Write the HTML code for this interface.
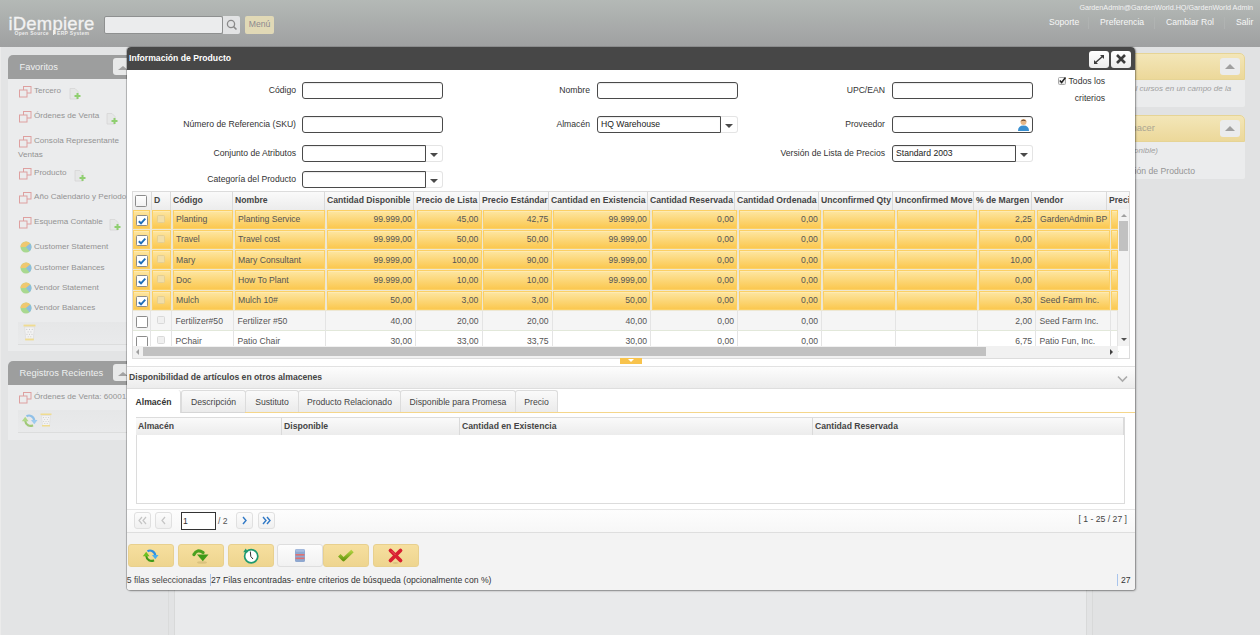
<!DOCTYPE html>
<html><head><meta charset="utf-8"><style>
*{box-sizing:border-box;margin:0;padding:0}
html,body{width:1260px;height:635px;overflow:hidden}
body{position:relative;background:#e3e4e5;font-family:"Liberation Sans",sans-serif;font-size:8.64px;color:#333}
.a{position:absolute}
.nw{white-space:nowrap}
#hdr{left:0;top:0;width:1260px;height:47px;background:linear-gradient(#b4b9b6,#9fa0a1)}
.pnl{background:#ebeced}
.ph{background:#9d9e9e;color:#eef0f0;font-size:9.36px}
.lnk{color:#939393;font-size:8.1px;white-space:nowrap}
#dlg{left:127px;top:47px;width:1008px;height:543px;background:#fff;border-radius:4px 4px 3px 3px;box-shadow:0 0 0 1px rgba(0,0,0,.10), 1px 1px 2px rgba(0,0,0,.35), -1px 0 1px rgba(0,0,0,.15)}
.lbl{font-size:8.64px;color:#333;text-align:right;white-space:nowrap}
.inp{height:17px;border:1px solid #4a4a4a;border-radius:3px;background:#fff;font-size:8.64px;color:#222;box-shadow:inset 0 1px 1px rgba(0,0,0,.08)}
.cbi{border-radius:3px 0 0 3px}
.cbb{width:17px;height:17px;border:1px solid #e4e4e4;border-left:none;background:#fff;border-radius:0 3px 3px 0}
.cbb:after{content:"";position:absolute;left:4px;top:7px;border-left:4px solid transparent;border-right:4px solid transparent;border-top:4px solid #4a4a4a}
.gh{top:0;height:18px;background:linear-gradient(#fafafa,#ececec);border-right:1px solid #dadada;font-weight:bold;color:#444;padding:3px 0 0 2px;white-space:nowrap;overflow:hidden}
.cell{white-space:nowrap;overflow:hidden;color:#555;padding:4.5px 3px 0 3.5px;line-height:10px}
.sel{background:linear-gradient(#fde6a2,#fbc850);border:1px solid #fcd064;box-shadow:inset 0 1px 0 rgba(255,240,200,.45);padding:3.5px 2.5px 0 2.5px}
.r{text-align:right}
.tab{top:0;height:22px;border:1px solid #dcdcdc;border-bottom:none;border-radius:3px 3px 0 0;background:linear-gradient(#fafafa,#ebebeb);color:#444;text-align:center;padding-top:5.5px;white-space:nowrap}
.pb{width:17px;height:17px;border:1px solid #e0e0e0;border-radius:3px;background:linear-gradient(#fcfcfc,#f0f0f0)}
.tbtn{top:497px;width:46px;height:23px;border-radius:3px;background:linear-gradient(#f6dd9a,#efd58e);border:1px solid #e9d08b}
</style></head><body>
<div id="hdr" class="a"></div>
<div class="a nw" style="left:8.5px;top:14.5px;color:#f2f2f2;font-size:18.5px;line-height:18.5px;letter-spacing:0.2px;-webkit-text-stroke:0.3px #f2f2f2">iDempiere</div>
<div class="a nw" style="left:14.5px;top:30.5px;color:#ececec;font-size:5px;line-height:5px;letter-spacing:0.3px;font-weight:bold">Open Source</div>
<div class="a" style="left:52.6px;top:30px;width:1.8px;height:5px;background:#ededed"></div>
<div class="a nw" style="left:57px;top:30.5px;color:#ececec;font-size:5px;line-height:5px;letter-spacing:0.3px;font-weight:bold">ERP System</div>
<div class="a" style="left:104px;top:16px;width:119px;height:18px;background:#ebeced;border:1px solid #8e9090;border-radius:2px"></div>
<div class="a" style="left:223px;top:16px;width:17px;height:18px;background:#e2e3e4;border-radius:0 2px 2px 0"></div>
<svg class="a" style="left:226px;top:19px" width="12" height="12" viewBox="0 0 12 12"><circle cx="5" cy="5" r="3.6" fill="none" stroke="#8a8a8a" stroke-width="1.3"/><line x1="7.6" y1="7.6" x2="10.5" y2="10.5" stroke="#8a8a8a" stroke-width="1.5"/></svg>
<div class="a nw" style="left:245px;top:16px;width:29px;height:18px;background:#e1d9b6;border-radius:2px;color:#8d8a90;font-size:8.64px;line-height:17px;text-align:center">Menú</div>
<div class="a nw" style="right:7px;top:3px;color:#f3f3f3;font-size:7.2px">GardenAdmin@GardenWorld.HQ/GardenWorld Admin</div>
<div class="a nw" style="left:1049px;top:17px;color:#f7f7f7;font-size:8.64px">Soporte</div>
<div class="a nw" style="left:1100px;top:17px;color:#f7f7f7;font-size:8.64px">Preferencia</div>
<div class="a nw" style="left:1166px;top:17px;color:#f7f7f7;font-size:8.64px">Cambiar Rol</div>
<div class="a nw" style="left:1236px;top:17px;color:#f7f7f7;font-size:8.64px">Salir</div>
<div class="a" style="left:1088px;top:17px;width:1px;height:12px;background:#b0b3b2"></div>
<div class="a" style="left:1154px;top:17px;width:1px;height:12px;background:#b0b3b2"></div>
<div class="a" style="left:1224px;top:17px;width:1px;height:12px;background:#b0b3b2"></div>
<div class="a" style="left:0;top:47px;width:168px;height:588px;background:#e3e4e5;border-left:1px solid #ebebeb"></div>
<div class="a" style="left:168px;top:47px;width:7px;height:588px;background:#e2e3e4;border-left:1px solid #dadbdb;border-right:1px solid #d8d9d9"></div>
<div class="a" style="left:175px;top:47px;width:911px;height:588px;background:#e9eaeb"></div>
<div class="a" style="left:1086px;top:47px;width:7px;height:588px;background:#e2e3e4;border-left:1px solid #d8d9d9;border-right:1px solid #d8d9d9"></div>
<div class="a" style="left:1093px;top:47px;width:167px;height:588px;background:#e1e2e3"></div>
<div class="a pnl" style="left:8px;top:55px;width:161px;height:296px;border-radius:5px 5px 0 0"></div>
<div class="a ph nw" style="left:8px;top:55px;width:161px;height:24px;border-radius:5px 5px 0 0;padding:7px 0 0 11.5px">Favoritos</div>
<div class="a" style="left:113px;top:58px;width:20px;height:17px;background:#e8e9e9;border-radius:3px"></div>
<div class="a" style="left:118px;top:65.5px;border-left:5px solid transparent;border-right:5px solid transparent;border-bottom:4px solid #a2a2a2"></div>
<svg class="a" style="left:19px;top:86px" width="13" height="12" viewBox="0 0 13 12"><rect x="4.5" y="0.5" width="7.5" height="6.5" fill="none" stroke="#dea0a0" stroke-width="1"/><rect x="0.5" y="4" width="7.5" height="7" fill="#ebeced" stroke="#dea0a0" stroke-width="1"/></svg>
<div class="a lnk" style="left:34px;top:86px">Tercero</div>
<svg class="a" style="left:69px;top:88px" width="12" height="12" viewBox="0 0 12 12"><path d="M1 0.5h5l3 3v7.5h-8z" fill="#e6e7e7" stroke="#d5d6d6" stroke-width="0.8"/><path d="M5.5 8h6M8.5 5v6" stroke="#8fcf70" stroke-width="2"/></svg>
<svg class="a" style="left:19px;top:111px" width="13" height="12" viewBox="0 0 13 12"><rect x="4.5" y="0.5" width="7.5" height="6.5" fill="none" stroke="#dea0a0" stroke-width="1"/><rect x="0.5" y="4" width="7.5" height="7" fill="#ebeced" stroke="#dea0a0" stroke-width="1"/></svg>
<div class="a lnk" style="left:34px;top:111px">Órdenes de Venta</div>
<svg class="a" style="left:106px;top:113px" width="12" height="12" viewBox="0 0 12 12"><path d="M1 0.5h5l3 3v7.5h-8z" fill="#e6e7e7" stroke="#d5d6d6" stroke-width="0.8"/><path d="M5.5 8h6M8.5 5v6" stroke="#8fcf70" stroke-width="2"/></svg>
<svg class="a" style="left:19px;top:136px" width="13" height="12" viewBox="0 0 13 12"><rect x="4.5" y="0.5" width="7.5" height="6.5" fill="none" stroke="#dea0a0" stroke-width="1"/><rect x="0.5" y="4" width="7.5" height="7" fill="#ebeced" stroke="#dea0a0" stroke-width="1"/></svg>
<div class="a lnk" style="left:34px;top:136px">Consola Representante</div>
<svg class="a" style="left:19px;top:168px" width="13" height="12" viewBox="0 0 13 12"><rect x="4.5" y="0.5" width="7.5" height="6.5" fill="none" stroke="#dea0a0" stroke-width="1"/><rect x="0.5" y="4" width="7.5" height="7" fill="#ebeced" stroke="#dea0a0" stroke-width="1"/></svg>
<div class="a lnk" style="left:34px;top:168px">Producto</div>
<svg class="a" style="left:74px;top:170px" width="12" height="12" viewBox="0 0 12 12"><path d="M1 0.5h5l3 3v7.5h-8z" fill="#e6e7e7" stroke="#d5d6d6" stroke-width="0.8"/><path d="M5.5 8h6M8.5 5v6" stroke="#8fcf70" stroke-width="2"/></svg>
<svg class="a" style="left:19px;top:192px" width="13" height="12" viewBox="0 0 13 12"><rect x="4.5" y="0.5" width="7.5" height="6.5" fill="none" stroke="#dea0a0" stroke-width="1"/><rect x="0.5" y="4" width="7.5" height="7" fill="#ebeced" stroke="#dea0a0" stroke-width="1"/></svg>
<div class="a lnk" style="left:34px;top:192px">Año Calendario y Periodo</div>
<svg class="a" style="left:19px;top:217px" width="13" height="12" viewBox="0 0 13 12"><rect x="4.5" y="0.5" width="7.5" height="6.5" fill="none" stroke="#dea0a0" stroke-width="1"/><rect x="0.5" y="4" width="7.5" height="7" fill="#ebeced" stroke="#dea0a0" stroke-width="1"/></svg>
<div class="a lnk" style="left:34px;top:217px">Esquema Contable</div>
<svg class="a" style="left:109px;top:219px" width="12" height="12" viewBox="0 0 12 12"><path d="M1 0.5h5l3 3v7.5h-8z" fill="#e6e7e7" stroke="#d5d6d6" stroke-width="0.8"/><path d="M5.5 8h6M8.5 5v6" stroke="#8fcf70" stroke-width="2"/></svg>
<div class="a lnk" style="left:18px;top:150px">Ventas</div>
<svg class="a" style="left:20px;top:241px" width="12" height="12" viewBox="0 0 12 12"><circle cx="6" cy="6" r="5.5" fill="#a8d890"/><path d="M6 6L0.5 6A5.5 5.5 0 0 1 10.2 2.5z" fill="#f0c870"/><path d="M6 6L10.2 2.5A5.5 5.5 0 0 1 9.5 10.2z" fill="#8cbde0"/></svg>
<div class="a lnk" style="left:34px;top:242px">Customer Statement</div>
<svg class="a" style="left:20px;top:262px" width="12" height="12" viewBox="0 0 12 12"><circle cx="6" cy="6" r="5.5" fill="#a8d890"/><path d="M6 6L0.5 6A5.5 5.5 0 0 1 10.2 2.5z" fill="#f0c870"/><path d="M6 6L10.2 2.5A5.5 5.5 0 0 1 9.5 10.2z" fill="#8cbde0"/></svg>
<div class="a lnk" style="left:34px;top:263px">Customer Balances</div>
<svg class="a" style="left:20px;top:282px" width="12" height="12" viewBox="0 0 12 12"><circle cx="6" cy="6" r="5.5" fill="#a8d890"/><path d="M6 6L0.5 6A5.5 5.5 0 0 1 10.2 2.5z" fill="#f0c870"/><path d="M6 6L10.2 2.5A5.5 5.5 0 0 1 9.5 10.2z" fill="#8cbde0"/></svg>
<div class="a lnk" style="left:34px;top:283px">Vendor Statement</div>
<svg class="a" style="left:20px;top:302px" width="12" height="12" viewBox="0 0 12 12"><circle cx="6" cy="6" r="5.5" fill="#a8d890"/><path d="M6 6L0.5 6A5.5 5.5 0 0 1 10.2 2.5z" fill="#f0c870"/><path d="M6 6L10.2 2.5A5.5 5.5 0 0 1 9.5 10.2z" fill="#8cbde0"/></svg>
<div class="a lnk" style="left:34px;top:303px">Vendor Balances</div>
<div class="a" style="left:18px;top:322px;width:151px;height:23px;background:linear-gradient(#e6e7e8,#e9eaeb);border-bottom:1px solid #dcdddd"></div>
<svg class="a" style="left:22.5px;top:324px" width="13" height="17" viewBox="0 0 12 14" preserveAspectRatio="none"><rect x="0.5" y="0.5" width="11" height="1.6" fill="#f0dc90"/><path d="M1.5 2.5h9l-1 10h-7z" fill="#f2f2f2" stroke="#dcdcdc" stroke-width="0.6"/><g fill="#c8c8c8"><circle cx="3.5" cy="4.5" r=".5"/><circle cx="6" cy="4.5" r=".5"/><circle cx="8.5" cy="4.5" r=".5"/><circle cx="4.7" cy="6.5" r=".5"/><circle cx="7.3" cy="6.5" r=".5"/><circle cx="3.7" cy="8.5" r=".5"/><circle cx="6" cy="8.5" r=".5"/><circle cx="8.3" cy="8.5" r=".5"/><circle cx="4.8" cy="10.5" r=".5"/><circle cx="7.2" cy="10.5" r=".5"/></g><rect x="2" y="12" width="8" height="1.5" fill="#f0dc90"/></svg>
<div class="a pnl" style="left:8px;top:361px;width:161px;height:79px;border-radius:5px 5px 0 0"></div>
<div class="a ph nw" style="left:8px;top:361px;width:161px;height:24px;border-radius:5px 5px 0 0;padding:7px 0 0 11.5px">Registros Recientes</div>
<div class="a" style="left:113px;top:364px;width:20px;height:17px;background:#e8e9e9;border-radius:3px"></div>
<div class="a" style="left:118px;top:371.5px;border-left:5px solid transparent;border-right:5px solid transparent;border-bottom:4px solid #a2a2a2"></div>
<svg class="a" style="left:19px;top:392px" width="13" height="12" viewBox="0 0 13 12"><rect x="4.5" y="0.5" width="7.5" height="6.5" fill="none" stroke="#dea0a0" stroke-width="1"/><rect x="0.5" y="4" width="7.5" height="7" fill="#ebeced" stroke="#dea0a0" stroke-width="1"/></svg>
<div class="a lnk" style="left:34px;top:392px">Órdenes de Venta: 60001</div>
<div class="a" style="left:18px;top:410px;width:151px;height:23px;background:linear-gradient(#e6e7e8,#e9eaeb);border-bottom:1px solid #dcdddd"></div>
<svg class="a" style="left:21px;top:412px" width="18" height="17" viewBox="0 0 18 17"><path d="M5.5 4.2A5.2 5.2 0 0 1 13.2 8.5" fill="none" stroke="#90c0e8" stroke-width="2.2"/><path d="M10 8h6.5l-3.2 4.2z" fill="#9ccbef"/><path d="M12 13.2A5.2 5.2 0 0 1 4.3 9" fill="none" stroke="#a0c878" stroke-width="2.2"/><path d="M0.8 9.2h6.8l-3.4-4.4z" fill="#b0d888"/></svg>
<svg class="a" style="left:40px;top:413px" width="12" height="14" viewBox="0 0 12 14"><rect x="0.5" y="0.5" width="11" height="1.6" fill="#f0dc90"/><path d="M1.5 2.5h9l-1 10h-7z" fill="#f2f2f2" stroke="#dcdcdc" stroke-width="0.6"/><g fill="#c8c8c8"><circle cx="3.5" cy="4.5" r=".5"/><circle cx="6" cy="4.5" r=".5"/><circle cx="8.5" cy="4.5" r=".5"/><circle cx="4.7" cy="6.5" r=".5"/><circle cx="7.3" cy="6.5" r=".5"/><circle cx="3.7" cy="8.5" r=".5"/><circle cx="6" cy="8.5" r=".5"/><circle cx="8.3" cy="8.5" r=".5"/><circle cx="4.8" cy="10.5" r=".5"/><circle cx="7.2" cy="10.5" r=".5"/></g><rect x="2" y="12" width="8" height="1.5" fill="#f0dc90"/></svg>
<div class="a pnl" style="left:1130px;top:53px;width:115px;height:54px;border-radius:5px 5px 2px 2px"></div>
<div class="a" style="left:1130px;top:53px;width:115px;height:27px;border-radius:5px 5px 0 0;background:linear-gradient(#f3e6b8,#ecd89a);border:1px solid #e6d495"></div>
<div class="a" style="left:1220px;top:58px;width:20px;height:17px;background:#ebeced;border-radius:3px"></div>
<div class="a" style="left:1225px;top:64px;border-left:5px solid transparent;border-right:5px solid transparent;border-bottom:5px solid #a0a0a0"></div>
<div class="a pnl" style="left:1130px;top:115px;width:115px;height:64px;border-radius:5px 5px 2px 2px"></div>
<div class="a" style="left:1130px;top:115px;width:115px;height:27px;border-radius:5px 5px 0 0;background:linear-gradient(#f3e6b8,#ecd89a);border:1px solid #e6d495"></div>
<div class="a" style="left:1220px;top:120px;width:20px;height:17px;background:#ebeced;border-radius:3px"></div>
<div class="a" style="left:1225px;top:126px;border-left:5px solid transparent;border-right:5px solid transparent;border-bottom:5px solid #a0a0a0"></div>
<div class="a nw" style="left:1135.5px;top:84px;color:#a0a0a0;font-size:8px;font-style:italic">l cursos en un campo de la</div>
<div class="a nw" style="left:1131.5px;top:122.5px;color:#aaa593;font-size:9.36px">hacer</div>
<div class="a nw" style="left:1134px;top:145.5px;color:#a0a0a0;font-size:8px;font-style:italic">onible)</div>
<div class="a nw" style="left:1130.3px;top:166px;color:#959595;font-size:8.64px">ción de Producto</div>
<div id="dlg" class="a">
<div class="a nw" style="left:0;top:0;width:1008px;height:23px;background:#474747;border-radius:4px 4px 0 0;color:#fff;font-weight:bold;padding:5.5px 0 0 2px">Información de Producto</div>
<div class="a" style="left:962px;top:4px;width:20px;height:17px;background:linear-gradient(#fff,#ececec);border-radius:3px"></div>
<svg class="a" style="left:964px;top:5px" width="16" height="15" viewBox="0 0 16 15"><path d="M4 11L12 4" stroke="#3c3c3c" stroke-width="1.4"/><path d="M9 3h4v4z" fill="#3c3c3c"/><path d="M3 8v4h4z" fill="#3c3c3c"/></svg>
<div class="a" style="left:984px;top:4px;width:20px;height:17px;background:linear-gradient(#fff,#ececec);border-radius:3px"></div>
<svg class="a" style="left:988px;top:6px" width="12" height="12" viewBox="0 0 12 12"><path d="M2 2L10 10M10 2L2 10" stroke="#3c3c3c" stroke-width="2.6"/></svg>
<div class="a lbl" style="right:839px;top:38px">Código</div>
<div class="a lbl" style="right:839px;top:72px">Número de Referencia (SKU)</div>
<div class="a lbl" style="right:839px;top:101px">Conjunto de Atributos</div>
<div class="a lbl" style="right:839px;top:127px">Categoría del Producto</div>
<div class="a lbl" style="right:545px;top:38px">Nombre</div>
<div class="a lbl" style="right:545px;top:72px">Almacén</div>
<div class="a lbl" style="right:250px;top:38px">UPC/EAN</div>
<div class="a lbl" style="right:250px;top:72px">Proveedor</div>
<div class="a lbl" style="right:250px;top:101px">Versión de Lista de Precios</div>
<div class="a inp nw" style="left:175px;top:35px;width:141px;padding:2px 3px"></div>
<div class="a inp nw" style="left:175px;top:69px;width:141px;padding:2px 3px"></div>
<div class="a inp cbi nw" style="left:175px;top:98px;width:124px;padding:2px 3px"></div>
<div class="a cbb" style="left:299px;top:98px"></div>
<div class="a inp cbi nw" style="left:175px;top:124px;width:124px;padding:2px 3px"></div>
<div class="a cbb" style="left:299px;top:124px"></div>
<div class="a inp nw" style="left:470px;top:35px;width:141px;padding:2px 3px"></div>
<div class="a inp cbi nw" style="left:470px;top:69px;width:124px;padding:2px 3px">HQ Warehouse</div>
<div class="a cbb" style="left:594px;top:69px"></div>
<div class="a inp nw" style="left:765px;top:35px;width:141px;padding:2px 3px"></div>
<div class="a inp nw" style="left:765px;top:69px;width:141px;padding:2px 3px"></div>
<div class="a inp cbi nw" style="left:765px;top:98px;width:124px;padding:2px 3px">Standard 2003</div>
<div class="a cbb" style="left:889px;top:98px"></div>
<svg class="a" style="left:890px;top:71px" width="13" height="13" viewBox="0 0 13 13"><circle cx="6.5" cy="4" r="3" fill="#e8b888"/><path d="M3.5 3.5Q6.5 -0.5 9.5 3.5Q6.5 2 3.5 3.5z" fill="#6a4a30"/><path d="M1 13Q1 7.5 6.5 7.5Q12 7.5 12 13z" fill="#3a8fd0"/></svg>
<div class="a" style="left:931px;top:30px;width:8px;height:8px;border:1px solid #a8a8a8;background:linear-gradient(#fff,#e6e6e6);border-radius:1.5px"></div>
<svg class="a" style="left:931px;top:29px" width="9" height="9" viewBox="0 0 9 9"><path d="M1.8 4.5L3.6 6.5L7.5 1.5" fill="none" stroke="#222" stroke-width="1.5"/></svg>
<div class="a lbl" style="right:30px;top:29px">Todos los</div>
<div class="a lbl" style="right:30px;top:46px">criterios</div>
<div class="a" style="left:5px;top:144px;width:998px;height:168px;border:1px solid #dcdcdc;background:#fff;overflow:hidden">
<div class="a gh" style="left:-1px;width:20px"></div>
<div class="a gh" style="left:19px;width:19px">D</div>
<div class="a gh" style="left:38px;width:62px">Código</div>
<div class="a gh" style="left:100px;width:92px">Nombre</div>
<div class="a gh" style="left:192px;width:89px">Cantidad Disponible</div>
<div class="a gh" style="left:281px;width:66px">Precio de Lista</div>
<div class="a gh" style="left:347px;width:69px">Precio Estándar</div>
<div class="a gh" style="left:416px;width:99px">Cantidad en Existencia</div>
<div class="a gh" style="left:515px;width:87px">Cantidad Reservada</div>
<div class="a gh" style="left:602px;width:84px">Cantidad Ordenada</div>
<div class="a gh" style="left:686px;width:74px">Unconfirmed Qty</div>
<div class="a gh" style="left:760px;width:81px">Unconfirmed Move</div>
<div class="a gh" style="left:841px;width:58px">% de Margen</div>
<div class="a gh" style="left:899px;width:75px">Vendor</div>
<div class="a gh" style="left:974px;width:53px">Precio</div>
<div class="a" style="left:2px;top:3px;width:12px;height:12px;border:1px solid #8c8c8c;border-radius:1.5px;background:linear-gradient(#fff,#f2f2f2)"></div>
<div class="a" style="left:0;top:17.5px;width:986px;height:20.3px;background:#ede7d3"></div>
<div class="a cell sel" style="left:-0.4px;top:17.5px;width:17.8px;height:19.3px;text-align:left"></div>
<div class="a cell sel" style="left:18.6px;top:17.5px;width:19.8px;height:19.3px;text-align:left"></div>
<div class="a cell sel" style="left:39.6px;top:17.5px;width:60.8px;height:19.3px;text-align:left">Planting</div>
<div class="a cell sel" style="left:101.6px;top:17.5px;width:90.8px;height:19.3px;text-align:left">Planting Service</div>
<div class="a cell sel" style="left:193.6px;top:17.5px;width:88.8px;height:19.3px;text-align:right">99.999,00</div>
<div class="a cell sel" style="left:283.6px;top:17.5px;width:65.3px;height:19.3px;text-align:right">45,00</div>
<div class="a cell sel" style="left:350.1px;top:17.5px;width:68.8px;height:19.3px;text-align:right">42,75</div>
<div class="a cell sel" style="left:420.1px;top:17.5px;width:97.3px;height:19.3px;text-align:right">99.999,00</div>
<div class="a cell sel" style="left:518.6px;top:17.5px;width:85.8px;height:19.3px;text-align:right">0,00</div>
<div class="a cell sel" style="left:605.6px;top:17.5px;width:82.8px;height:19.3px;text-align:right">0,00</div>
<div class="a cell sel" style="left:689.6px;top:17.5px;width:72.8px;height:19.3px;text-align:right"></div>
<div class="a cell sel" style="left:763.6px;top:17.5px;width:80.8px;height:19.3px;text-align:right"></div>
<div class="a cell sel" style="left:845.6px;top:17.5px;width:56.8px;height:19.3px;text-align:right">2,25</div>
<div class="a cell sel" style="left:903.6px;top:17.5px;width:73.3px;height:19.3px;text-align:left">GardenAdmin BP</div>
<div class="a cell sel" style="left:978.1px;top:17.5px;width:6.3px;height:19.3px;text-align:left"></div>
<div class="a" style="left:3.3px;top:22.5px;width:11.5px;height:11.5px;border:1px solid #8c8c8c;border-radius:1.5px;background:#fff"></div>
<svg class="a" style="left:4px;top:23.5px" width="10" height="10" viewBox="0 0 10 10"><path d="M1.8 5.3L4 7.3L8.3 2.6" fill="none" stroke="#1f6fb8" stroke-width="1.9"/></svg>
<div class="a" style="left:24px;top:22.5px;width:8px;height:8px;border:1px solid #e3cf95;border-radius:1.5px;background:#f1dea8"></div>
<div class="a" style="left:0;top:37.8px;width:986px;height:20.3px;background:#ede7d3"></div>
<div class="a cell sel" style="left:-0.4px;top:37.8px;width:17.8px;height:19.3px;text-align:left"></div>
<div class="a cell sel" style="left:18.6px;top:37.8px;width:19.8px;height:19.3px;text-align:left"></div>
<div class="a cell sel" style="left:39.6px;top:37.8px;width:60.8px;height:19.3px;text-align:left">Travel</div>
<div class="a cell sel" style="left:101.6px;top:37.8px;width:90.8px;height:19.3px;text-align:left">Travel cost</div>
<div class="a cell sel" style="left:193.6px;top:37.8px;width:88.8px;height:19.3px;text-align:right">99.999,00</div>
<div class="a cell sel" style="left:283.6px;top:37.8px;width:65.3px;height:19.3px;text-align:right">50,00</div>
<div class="a cell sel" style="left:350.1px;top:37.8px;width:68.8px;height:19.3px;text-align:right">50,00</div>
<div class="a cell sel" style="left:420.1px;top:37.8px;width:97.3px;height:19.3px;text-align:right">99.999,00</div>
<div class="a cell sel" style="left:518.6px;top:37.8px;width:85.8px;height:19.3px;text-align:right">0,00</div>
<div class="a cell sel" style="left:605.6px;top:37.8px;width:82.8px;height:19.3px;text-align:right">0,00</div>
<div class="a cell sel" style="left:689.6px;top:37.8px;width:72.8px;height:19.3px;text-align:right"></div>
<div class="a cell sel" style="left:763.6px;top:37.8px;width:80.8px;height:19.3px;text-align:right"></div>
<div class="a cell sel" style="left:845.6px;top:37.8px;width:56.8px;height:19.3px;text-align:right">0,00</div>
<div class="a cell sel" style="left:903.6px;top:37.8px;width:73.3px;height:19.3px;text-align:left"></div>
<div class="a cell sel" style="left:978.1px;top:37.8px;width:6.3px;height:19.3px;text-align:left"></div>
<div class="a" style="left:3.3px;top:42.8px;width:11.5px;height:11.5px;border:1px solid #8c8c8c;border-radius:1.5px;background:#fff"></div>
<svg class="a" style="left:4px;top:43.8px" width="10" height="10" viewBox="0 0 10 10"><path d="M1.8 5.3L4 7.3L8.3 2.6" fill="none" stroke="#1f6fb8" stroke-width="1.9"/></svg>
<div class="a" style="left:24px;top:42.8px;width:8px;height:8px;border:1px solid #e3cf95;border-radius:1.5px;background:#f1dea8"></div>
<div class="a" style="left:0;top:58.1px;width:986px;height:20.3px;background:#ede7d3"></div>
<div class="a cell sel" style="left:-0.4px;top:58.1px;width:17.8px;height:19.3px;text-align:left"></div>
<div class="a cell sel" style="left:18.6px;top:58.1px;width:19.8px;height:19.3px;text-align:left"></div>
<div class="a cell sel" style="left:39.6px;top:58.1px;width:60.8px;height:19.3px;text-align:left">Mary</div>
<div class="a cell sel" style="left:101.6px;top:58.1px;width:90.8px;height:19.3px;text-align:left">Mary Consultant</div>
<div class="a cell sel" style="left:193.6px;top:58.1px;width:88.8px;height:19.3px;text-align:right">99.999,00</div>
<div class="a cell sel" style="left:283.6px;top:58.1px;width:65.3px;height:19.3px;text-align:right">100,00</div>
<div class="a cell sel" style="left:350.1px;top:58.1px;width:68.8px;height:19.3px;text-align:right">90,00</div>
<div class="a cell sel" style="left:420.1px;top:58.1px;width:97.3px;height:19.3px;text-align:right">99.999,00</div>
<div class="a cell sel" style="left:518.6px;top:58.1px;width:85.8px;height:19.3px;text-align:right">0,00</div>
<div class="a cell sel" style="left:605.6px;top:58.1px;width:82.8px;height:19.3px;text-align:right">0,00</div>
<div class="a cell sel" style="left:689.6px;top:58.1px;width:72.8px;height:19.3px;text-align:right"></div>
<div class="a cell sel" style="left:763.6px;top:58.1px;width:80.8px;height:19.3px;text-align:right"></div>
<div class="a cell sel" style="left:845.6px;top:58.1px;width:56.8px;height:19.3px;text-align:right">10,00</div>
<div class="a cell sel" style="left:903.6px;top:58.1px;width:73.3px;height:19.3px;text-align:left"></div>
<div class="a cell sel" style="left:978.1px;top:58.1px;width:6.3px;height:19.3px;text-align:left"></div>
<div class="a" style="left:3.3px;top:63.1px;width:11.5px;height:11.5px;border:1px solid #8c8c8c;border-radius:1.5px;background:#fff"></div>
<svg class="a" style="left:4px;top:64.1px" width="10" height="10" viewBox="0 0 10 10"><path d="M1.8 5.3L4 7.3L8.3 2.6" fill="none" stroke="#1f6fb8" stroke-width="1.9"/></svg>
<div class="a" style="left:24px;top:63.1px;width:8px;height:8px;border:1px solid #e3cf95;border-radius:1.5px;background:#f1dea8"></div>
<div class="a" style="left:0;top:78.4px;width:986px;height:20.3px;background:#ede7d3"></div>
<div class="a cell sel" style="left:-0.4px;top:78.4px;width:17.8px;height:19.3px;text-align:left"></div>
<div class="a cell sel" style="left:18.6px;top:78.4px;width:19.8px;height:19.3px;text-align:left"></div>
<div class="a cell sel" style="left:39.6px;top:78.4px;width:60.8px;height:19.3px;text-align:left">Doc</div>
<div class="a cell sel" style="left:101.6px;top:78.4px;width:90.8px;height:19.3px;text-align:left">How To Plant</div>
<div class="a cell sel" style="left:193.6px;top:78.4px;width:88.8px;height:19.3px;text-align:right">99.999,00</div>
<div class="a cell sel" style="left:283.6px;top:78.4px;width:65.3px;height:19.3px;text-align:right">10,00</div>
<div class="a cell sel" style="left:350.1px;top:78.4px;width:68.8px;height:19.3px;text-align:right">10,00</div>
<div class="a cell sel" style="left:420.1px;top:78.4px;width:97.3px;height:19.3px;text-align:right">99.999,00</div>
<div class="a cell sel" style="left:518.6px;top:78.4px;width:85.8px;height:19.3px;text-align:right">0,00</div>
<div class="a cell sel" style="left:605.6px;top:78.4px;width:82.8px;height:19.3px;text-align:right">0,00</div>
<div class="a cell sel" style="left:689.6px;top:78.4px;width:72.8px;height:19.3px;text-align:right"></div>
<div class="a cell sel" style="left:763.6px;top:78.4px;width:80.8px;height:19.3px;text-align:right"></div>
<div class="a cell sel" style="left:845.6px;top:78.4px;width:56.8px;height:19.3px;text-align:right">0,00</div>
<div class="a cell sel" style="left:903.6px;top:78.4px;width:73.3px;height:19.3px;text-align:left"></div>
<div class="a cell sel" style="left:978.1px;top:78.4px;width:6.3px;height:19.3px;text-align:left"></div>
<div class="a" style="left:3.3px;top:83.4px;width:11.5px;height:11.5px;border:1px solid #8c8c8c;border-radius:1.5px;background:#fff"></div>
<svg class="a" style="left:4px;top:84.4px" width="10" height="10" viewBox="0 0 10 10"><path d="M1.8 5.3L4 7.3L8.3 2.6" fill="none" stroke="#1f6fb8" stroke-width="1.9"/></svg>
<div class="a" style="left:24px;top:83.4px;width:8px;height:8px;border:1px solid #e3cf95;border-radius:1.5px;background:#f1dea8"></div>
<div class="a" style="left:0;top:98.7px;width:986px;height:20.3px;background:#ede7d3"></div>
<div class="a cell sel" style="left:-0.4px;top:98.7px;width:17.8px;height:19.3px;text-align:left"></div>
<div class="a cell sel" style="left:18.6px;top:98.7px;width:19.8px;height:19.3px;text-align:left"></div>
<div class="a cell sel" style="left:39.6px;top:98.7px;width:60.8px;height:19.3px;text-align:left">Mulch</div>
<div class="a cell sel" style="left:101.6px;top:98.7px;width:90.8px;height:19.3px;text-align:left">Mulch 10#</div>
<div class="a cell sel" style="left:193.6px;top:98.7px;width:88.8px;height:19.3px;text-align:right">50,00</div>
<div class="a cell sel" style="left:283.6px;top:98.7px;width:65.3px;height:19.3px;text-align:right">3,00</div>
<div class="a cell sel" style="left:350.1px;top:98.7px;width:68.8px;height:19.3px;text-align:right">3,00</div>
<div class="a cell sel" style="left:420.1px;top:98.7px;width:97.3px;height:19.3px;text-align:right">50,00</div>
<div class="a cell sel" style="left:518.6px;top:98.7px;width:85.8px;height:19.3px;text-align:right">0,00</div>
<div class="a cell sel" style="left:605.6px;top:98.7px;width:82.8px;height:19.3px;text-align:right">0,00</div>
<div class="a cell sel" style="left:689.6px;top:98.7px;width:72.8px;height:19.3px;text-align:right"></div>
<div class="a cell sel" style="left:763.6px;top:98.7px;width:80.8px;height:19.3px;text-align:right"></div>
<div class="a cell sel" style="left:845.6px;top:98.7px;width:56.8px;height:19.3px;text-align:right">0,30</div>
<div class="a cell sel" style="left:903.6px;top:98.7px;width:73.3px;height:19.3px;text-align:left">Seed Farm Inc.</div>
<div class="a cell sel" style="left:978.1px;top:98.7px;width:6.3px;height:19.3px;text-align:left"></div>
<div class="a" style="left:3.3px;top:103.7px;width:11.5px;height:11.5px;border:1px solid #8c8c8c;border-radius:1.5px;background:#fff"></div>
<svg class="a" style="left:4px;top:104.7px" width="10" height="10" viewBox="0 0 10 10"><path d="M1.8 5.3L4 7.3L8.3 2.6" fill="none" stroke="#1f6fb8" stroke-width="1.9"/></svg>
<div class="a" style="left:24px;top:103.7px;width:8px;height:8px;border:1px solid #e3cf95;border-radius:1.5px;background:#f1dea8"></div>
<div class="a" style="left:0;top:119px;width:986px;height:20.3px;background:#f5f5f5;border-bottom:1px solid #e2e8da"></div>
<div class="a cell" style="left:-1px;top:119px;width:19px;height:20px;border-right:1px solid #e4e4e4;text-align:left"></div>
<div class="a cell" style="left:18px;top:119px;width:21px;height:20px;border-right:1px solid #e4e4e4;text-align:left"></div>
<div class="a cell" style="left:39px;top:119px;width:62px;height:20px;border-right:1px solid #e4e4e4;text-align:left">Fertilizer#50</div>
<div class="a cell" style="left:101px;top:119px;width:92px;height:20px;border-right:1px solid #e4e4e4;text-align:left">Fertilizer #50</div>
<div class="a cell" style="left:193px;top:119px;width:90px;height:20px;border-right:1px solid #e4e4e4;text-align:right">40,00</div>
<div class="a cell" style="left:283px;top:119px;width:66.5px;height:20px;border-right:1px solid #e4e4e4;text-align:right">20,00</div>
<div class="a cell" style="left:349.5px;top:119px;width:70.0px;height:20px;border-right:1px solid #e4e4e4;text-align:right">20,00</div>
<div class="a cell" style="left:419.5px;top:119px;width:98.5px;height:20px;border-right:1px solid #e4e4e4;text-align:right">40,00</div>
<div class="a cell" style="left:518px;top:119px;width:87px;height:20px;border-right:1px solid #e4e4e4;text-align:right">0,00</div>
<div class="a cell" style="left:605px;top:119px;width:84px;height:20px;border-right:1px solid #e4e4e4;text-align:right">0,00</div>
<div class="a cell" style="left:689px;top:119px;width:74px;height:20px;border-right:1px solid #e4e4e4;text-align:right"></div>
<div class="a cell" style="left:763px;top:119px;width:82px;height:20px;border-right:1px solid #e4e4e4;text-align:right"></div>
<div class="a cell" style="left:845px;top:119px;width:58px;height:20px;border-right:1px solid #e4e4e4;text-align:right">2,00</div>
<div class="a cell" style="left:903px;top:119px;width:74.5px;height:20px;border-right:1px solid #e4e4e4;text-align:left">Seed Farm Inc.</div>
<div class="a cell" style="left:977.5px;top:119px;width:7.5px;height:20px;border-right:1px solid #e4e4e4;text-align:left"></div>
<div class="a" style="left:3.3px;top:124px;width:11.5px;height:11.5px;border:1px solid #8c8c8c;border-radius:1.5px;background:#fff"></div>
<div class="a" style="left:24px;top:124px;width:8px;height:8px;border:1px solid #d9d9d9;border-radius:1.5px;background:#f0f0f0"></div>
<div class="a" style="left:0;top:139.3px;width:986px;height:20.3px;background:#fff;border-bottom:1px solid #e2e8da"></div>
<div class="a cell" style="left:-1px;top:139.3px;width:19px;height:20px;border-right:1px solid #e4e4e4;text-align:left"></div>
<div class="a cell" style="left:18px;top:139.3px;width:21px;height:20px;border-right:1px solid #e4e4e4;text-align:left"></div>
<div class="a cell" style="left:39px;top:139.3px;width:62px;height:20px;border-right:1px solid #e4e4e4;text-align:left">PChair</div>
<div class="a cell" style="left:101px;top:139.3px;width:92px;height:20px;border-right:1px solid #e4e4e4;text-align:left">Patio Chair</div>
<div class="a cell" style="left:193px;top:139.3px;width:90px;height:20px;border-right:1px solid #e4e4e4;text-align:right">30,00</div>
<div class="a cell" style="left:283px;top:139.3px;width:66.5px;height:20px;border-right:1px solid #e4e4e4;text-align:right">33,00</div>
<div class="a cell" style="left:349.5px;top:139.3px;width:70.0px;height:20px;border-right:1px solid #e4e4e4;text-align:right">33,75</div>
<div class="a cell" style="left:419.5px;top:139.3px;width:98.5px;height:20px;border-right:1px solid #e4e4e4;text-align:right">30,00</div>
<div class="a cell" style="left:518px;top:139.3px;width:87px;height:20px;border-right:1px solid #e4e4e4;text-align:right">0,00</div>
<div class="a cell" style="left:605px;top:139.3px;width:84px;height:20px;border-right:1px solid #e4e4e4;text-align:right">0,00</div>
<div class="a cell" style="left:689px;top:139.3px;width:74px;height:20px;border-right:1px solid #e4e4e4;text-align:right"></div>
<div class="a cell" style="left:763px;top:139.3px;width:82px;height:20px;border-right:1px solid #e4e4e4;text-align:right"></div>
<div class="a cell" style="left:845px;top:139.3px;width:58px;height:20px;border-right:1px solid #e4e4e4;text-align:right">6,75</div>
<div class="a cell" style="left:903px;top:139.3px;width:74.5px;height:20px;border-right:1px solid #e4e4e4;text-align:left">Patio Fun, Inc.</div>
<div class="a cell" style="left:977.5px;top:139.3px;width:7.5px;height:20px;border-right:1px solid #e4e4e4;text-align:left"></div>
<div class="a" style="left:3.3px;top:144.3px;width:11.5px;height:11.5px;border:1px solid #8c8c8c;border-radius:1.5px;background:#fff"></div>
<div class="a" style="left:24px;top:144.3px;width:8px;height:8px;border:1px solid #d9d9d9;border-radius:1.5px;background:#f0f0f0"></div>
<div class="a" style="left:985px;top:17px;width:11px;height:137px;background:#f2f2f2"></div>
<div class="a" style="left:986px;top:29px;width:9px;height:30px;background:#c1c1c1"></div>
<div class="a" style="left:988px;top:22px;border-left:3px solid transparent;border-right:3px solid transparent;border-bottom:3px solid #a0a0a0"></div>
<div class="a" style="left:988px;top:146px;border-left:3px solid transparent;border-right:3px solid transparent;border-top:3px solid #505050"></div>
<div class="a" style="left:0;top:154px;width:985px;height:12px;background:#f1f1f1"></div>
<div class="a" style="left:10px;top:155px;width:843px;height:9px;background:#c1c1c1"></div>
<div class="a" style="left:3px;top:157px;border-top:3px solid transparent;border-bottom:3px solid transparent;border-right:3px solid #a0a0a0"></div>
<div class="a" style="left:977px;top:157px;border-top:3px solid transparent;border-bottom:3px solid transparent;border-left:3px solid #404040"></div>
</div>
<div class="a" style="left:493px;top:311px;width:22px;height:6px;background:#f8c34c"></div>
<div class="a" style="left:501px;top:312px;border-left:3px solid transparent;border-right:3px solid transparent;border-top:3px solid #fff"></div>
<div class="a nw" style="left:0;top:319px;width:1008px;height:23px;background:linear-gradient(#fdfdfd,#ececec);border-top:1px solid #e2e2e2;border-bottom:1px solid #dedede;font-weight:bold;color:#444;padding:5px 0 0 2px">Disponibilidad de artículos en otros almacenes</div>
<svg class="a" style="left:990px;top:328px" width="11" height="8" viewBox="0 0 11 8"><path d="M1 1.5L5.5 6L10 1.5" fill="none" stroke="#aaa" stroke-width="1.6"/></svg>
<div class="a" style="left:0;top:343px;width:1008px;height:23px;border-bottom:1px solid #f5d68a">
<div class="a tab" style="left:0px;width:54px;height:23px;background:#fff;border:none;border-right:1px solid #dcdcdc;font-weight:bold;color:#333;z-index:2;padding-top:6.5px">Almacén</div>
<div class="a tab" style="left:54px;width:65px">Descripción</div>
<div class="a tab" style="left:118px;width:54px">Sustituto</div>
<div class="a tab" style="left:171px;width:103px">Producto Relacionado</div>
<div class="a tab" style="left:273px;width:116px">Disponible para Promesa</div>
<div class="a tab" style="left:388px;width:43px">Precio</div>
<div class="a" style="left:54px;top:22px;width:64px;height:1px;background:#d6d6d6;z-index:3"></div>
</div>
<div class="a" style="left:9px;top:370px;width:989px;height:87px;border:1px solid #dcdcdc;background:#fff">
<div class="a gh" style="left:-1px;width:146px;height:17px;padding:3px 0 0 2px">Almacén</div>
<div class="a gh" style="left:145px;width:178px;height:17px;padding:3px 0 0 2px">Disponible</div>
<div class="a gh" style="left:323px;width:353px;height:17px;padding:3px 0 0 2px">Cantidad en Existencia</div>
<div class="a gh" style="left:676px;width:311px;height:17px;padding:3px 0 0 2px">Cantidad Reservada</div>
</div>
<div class="a" style="left:0;top:462px;width:1008px;height:24px;background:linear-gradient(#fdfdfd,#f7f7f7);border-top:1px solid #e6e6e6;border-bottom:1px solid #dedede"></div>
<div class="a pb" style="left:7px;top:465px"></div>
<div class="a pb" style="left:28px;top:465px"></div>
<div class="a pb" style="left:109px;top:465px"></div>
<div class="a pb" style="left:131px;top:465px"></div>
<svg class="a" style="left:7px;top:465px" width="17" height="17" viewBox="0 0 17 17"><path d="M8 5L5 8.5L8 12M12 5L9 8.5L12 12" fill="none" stroke="#c5c5c5" stroke-width="1.2"/></svg>
<svg class="a" style="left:28px;top:465px" width="17" height="17" viewBox="0 0 17 17"><path d="M10 5L7 8.5L10 12" fill="none" stroke="#c5c5c5" stroke-width="1.2"/></svg>
<svg class="a" style="left:109px;top:465px" width="17" height="17" viewBox="0 0 17 17"><path d="M7 5L10 8.5L7 12" fill="none" stroke="#2f78c6" stroke-width="1.4"/></svg>
<svg class="a" style="left:131px;top:465px" width="17" height="17" viewBox="0 0 17 17"><path d="M5 5L8 8.5L5 12M9 5L12 8.5L9 12" fill="none" stroke="#2f78c6" stroke-width="1.4"/></svg>
<div class="a nw" style="left:54px;top:465px;width:35px;height:18px;border:1.5px solid #333;background:#fff;padding:3px 0 0 1px;color:#333">1</div>
<div class="a nw" style="left:91px;top:468.5px;color:#555">/ 2</div>
<div class="a lbl" style="right:8px;top:467px;color:#444">[ 1 - 25 / 27 ]</div>
<div class="a" style="left:0;top:486px;width:1008px;height:57px;background:#f3f3f3;border-radius:0 0 3px 3px"></div>
<div class="a" style="left:1px;top:497px;width:46px;height:23px;border-radius:3px;background:linear-gradient(#f6df9f,#eed58f);border:1px solid #e8d08e"></div>
<div class="a" style="left:51px;top:497px;width:46px;height:23px;border-radius:3px;background:linear-gradient(#f6df9f,#eed58f);border:1px solid #e8d08e"></div>
<div class="a" style="left:101px;top:497px;width:46px;height:23px;border-radius:3px;background:linear-gradient(#f6df9f,#eed58f);border:1px solid #e8d08e"></div>
<div class="a" style="left:150px;top:497px;width:46px;height:23px;border-radius:3px;background:linear-gradient(#fdfdfd,#f1f1f1);border:1px solid #dedede"></div>
<div class="a" style="left:196px;top:497px;width:46px;height:23px;border-radius:3px;background:linear-gradient(#f6df9f,#eed58f);border:1px solid #e8d08e"></div>
<div class="a" style="left:246px;top:497px;width:46px;height:23px;border-radius:3px;background:linear-gradient(#f6df9f,#eed58f);border:1px solid #e8d08e"></div>
<svg class="a" style="left:15px;top:500px" width="18" height="17" viewBox="0 0 18 17"><path d="M5.5 4.2A5.2 5.2 0 0 1 13.2 8.5" fill="none" stroke="#2f8fe0" stroke-width="2.2"/><path d="M10 8h6.5l-3.2 4.2z" fill="#48b0f0"/><path d="M12 13.2A5.2 5.2 0 0 1 4.3 9" fill="none" stroke="#3f9a18" stroke-width="2.2"/><path d="M0.8 9.2h6.8l-3.4-4.4z" fill="#6cc020"/></svg>
<svg class="a" style="left:65px;top:500px" width="19" height="17" viewBox="0 0 19 17"><ellipse cx="10" cy="15.5" rx="5" ry="1.2" fill="rgba(120,100,40,.18)"/><path d="M2 7.5Q5 1.5 11 5.5" fill="none" stroke="#4aa020" stroke-width="3.2" stroke-linecap="round"/><path d="M5 7.5h11.5l-5.7 6.7z" fill="#3f9a18"/></svg>
<svg class="a" style="left:115px;top:500px" width="18" height="18" viewBox="0 0 18 18"><circle cx="9.2" cy="9.2" r="6.6" fill="#fff" stroke="#1e9a70" stroke-width="1.7"/><path d="M1.2 5.3h5l-2.5-3.8z" fill="#1e9a70"/><rect x="1" y="3" width="3" height="3" fill="#fff" opacity="0"/><path d="M8.3 4.5L8.8 9.5L11 12" fill="none" stroke="#333" stroke-width="1"/></svg>
<svg class="a" style="left:167px;top:500px" width="12" height="17" viewBox="0 0 12 17"><rect x="1" y="2" width="10" height="13" rx="1.5" fill="#8fa8d0"/><rect x="1.5" y="2.3" width="9" height="2.5" rx="1" fill="#a8bde0"/><rect x="1.5" y="7" width="9" height="1.6" fill="#e07070"/><rect x="1.5" y="10.5" width="9" height="1.6" fill="#e07070"/></svg>
<svg class="a" style="left:210px;top:501px" width="18" height="15" viewBox="0 0 18 15"><defs><linearGradient id="gc" x1="0" y1="0" x2="0" y2="1"><stop offset="0" stop-color="#b0d040"/><stop offset="1" stop-color="#6a9a10"/></linearGradient></defs><path d="M2.3 7.3L6.5 11.5L15.5 3" fill="none" stroke="url(#gc)" stroke-width="3.6" stroke-linejoin="round"/></svg>
<svg class="a" style="left:260px;top:500px" width="17" height="18" viewBox="0 0 17 18"><ellipse cx="8.5" cy="16" rx="3" ry="0.8" fill="rgba(100,80,40,.2)"/><path d="M3.5 3.5L13.5 13.5M13.5 3.5L3.5 13.5" stroke="#d82030" stroke-width="3.8" stroke-linecap="round"/><path d="M4.5 4L8.5 8" stroke="#f07080" stroke-width="1" opacity=".6"/></svg>
<div class="a nw" style="left:-0.3px;top:528px;color:#444">5 filas seleccionadas</div>
<div class="a" style="left:83px;top:527px;width:1px;height:12px;background:#a8c4ec"></div>
<div class="a nw" style="left:84px;top:528px;color:#333">27 Filas encontradas- entre criterios de búsqueda (opcionalmente con %)</div>
<div class="a" style="left:990px;top:527px;width:1px;height:12px;background:#a8c4ec"></div>
<div class="a nw" style="left:994px;top:528px;color:#333">27</div>
</div>
</body></html>
